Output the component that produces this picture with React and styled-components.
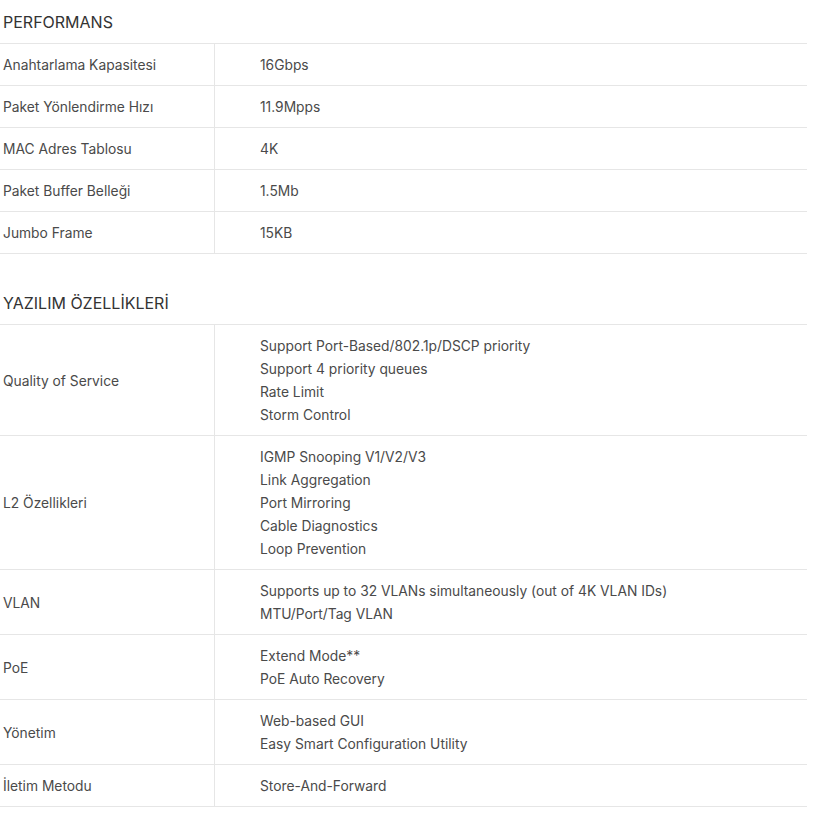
import React from "react";
import styled, { createGlobalStyle } from "styled-components";

const Global = createGlobalStyle`
  html, body { margin: 0; padding: 0; background: #fff; }
  body { font-family: Inter, "Noto Sans", sans-serif; color: #4a4a4a; }
`;

const Page = styled.div`
  width: 807px;
  display: flex;
  flex-direction: column;
  gap: 27px;
`;

const Section = styled.section`
  display: flex;
  flex-direction: column;
`;

const Heading = styled.h3`
  margin: 0;
  box-sizing: border-box;
  height: 44px;
  display: flex;
  align-items: center;
  padding: 1px 0 0 3px;
  font-size: 16px;
  font-weight: 400;
  color: #333;
  border-bottom: 1px solid #e6e6e6;
`;

const Row = styled.div`
  display: grid;
  grid-template-columns: 215px 1fr;
  border-bottom: 1px solid #e6e6e6;
  font-size: 13.8px;
  line-height: 23px;
`;

const Label = styled.div`
  padding: 10px 0 8px 3px;
  border-right: 1px solid #e6e6e6;
  display: flex;
  align-items: center;
`;

const Value = styled.div`
  padding: 10px 0 8px 45px;
  display: flex;
  flex-direction: column;
`;

const sections = [
  {
    title: "PERFORMANS",
    rows: [
      ["Anahtarlama Kapasitesi", ["16Gbps"]],
      ["Paket Yönlendirme Hızı", ["11.9Mpps"]],
      ["MAC Adres Tablosu", ["4K"]],
      ["Paket Buffer Belleği", ["1.5Mb"]],
      ["Jumbo Frame", ["15KB"]],
    ],
  },
  {
    title: "YAZILIM ÖZELLİKLERİ",
    rows: [
      [
        "Quality of Service",
        [
          "Support Port-Based/802.1p/DSCP priority",
          "Support 4 priority queues",
          "Rate Limit",
          "Storm Control",
        ],
      ],
      [
        "L2 Özellikleri",
        [
          "IGMP Snooping V1/V2/V3",
          "Link Aggregation",
          "Port Mirroring",
          "Cable Diagnostics",
          "Loop Prevention",
        ],
      ],
      [
        "VLAN",
        [
          "Supports up to 32 VLANs simultaneously (out of 4K VLAN IDs)",
          "MTU/Port/Tag VLAN",
        ],
      ],
      ["PoE", ["Extend Mode**", "PoE Auto Recovery"]],
      ["Yönetim", ["Web-based GUI", "Easy Smart Configuration Utility"]],
      ["İletim Metodu", ["Store-And-Forward"]],
    ],
  },
];

export default function App() {
  return (
    <>
      <Global />
      <Page>
        {sections.map((s) => (
          <Section key={s.title}>
            <Heading>{s.title}</Heading>
            {s.rows.map(([label, values]) => (
              <Row key={label}>
                <Label>{label}</Label>
                <Value>
                  {values.map((v) => (
                    <span key={v}>{v}</span>
                  ))}
                </Value>
              </Row>
            ))}
          </Section>
        ))}
      </Page>
    </>
  );
}
